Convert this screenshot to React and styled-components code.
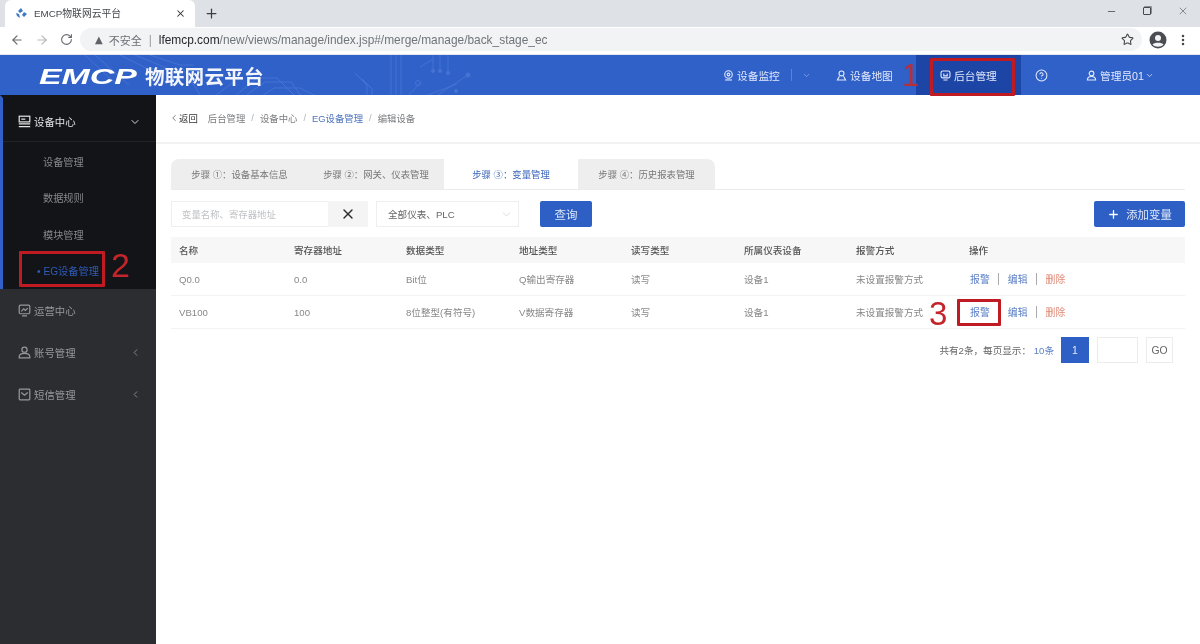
import React from 'react';
import styled, { createGlobalStyle } from 'styled-components';
import { ArrowLeft, ArrowRight, RotateCw, Star, EllipsisVertical, X, Plus, Minus, ChevronDown, ChevronLeft, CircleHelp } from 'lucide-react';

const Global = createGlobalStyle`
  html, body { margin: 0; padding: 0; height: 100%; background: #fff; }
  #root { height: 644px; }
  * { box-sizing: border-box; }
  body { font-family: "Liberation Sans", "Noto Sans CJK SC", sans-serif; overflow: hidden; }
`;
const Page = styled.div`width:1200px;height:644px;display:flex;flex-direction:column;position:relative;overflow:hidden;filter:blur(.3px);`;

/* browser chrome */
const TabStrip = styled.div`height:27px;background:#dee1e6;display:flex;align-items:flex-end;padding-left:5px;`;
const BrowserTab = styled.div`width:190px;height:27px;background:#fff;border-radius:6px 6px 0 0;display:flex;align-items:center;padding:0 9px 1px 10px;font-size:9.8px;color:#45484d;gap:6px;`;
const TabTitle = styled.span`flex:1;`;
const NewTab = styled.div`width:32px;height:27px;display:flex;align-items:center;justify-content:center;color:#3c4043;`;
const WinControls = styled.div`margin-left:auto;height:27px;display:flex;align-items:center;gap:26px;padding:0 11px 5px 0;color:#5a5d62;`;
const Restore = styled.span`width:8px;height:8px;border:1.4px solid #45484d;border-radius:1px;display:block;box-shadow:1px -1px 0 #8a8d92;`;
const UrlBar = styled.div`height:28px;background:#fff;display:flex;align-items:center;padding:0 10px 2px 10px;border-bottom:1px solid #e3e6ea;color:#666a70;`;
const NavIcons = styled.div`display:flex;gap:11px;align-items:center;width:70px;`;
const Omnibox = styled.div`flex:1;height:23px;background:#f1f3f4;border-radius:12px;display:flex;align-items:center;padding:0 8px 0 15px;font-size:11.9px;color:#70757a;gap:6px;`;
const Warn = styled.span`font-size:10px;color:#5f6368;font-family:"DejaVu Sans",sans-serif;`;
const Insecure = styled.span`font-size:11px;color:#6b6f74;`;
const Host = styled.b`font-weight:400;color:#24272b;`;
const UrlSep = styled.span`color:#9a9da1;margin:0 1px;`;
const OmniStar = styled.span`margin-left:auto;display:flex;color:#45484d;`;
const Avatar = styled.svg`width:18px;height:18px;margin:0 9px 0 7px;`;

/* app header */
const Header = styled.header`height:40px;background:#2f61c9;display:flex;align-items:center;position:relative;color:#fff;overflow:hidden;`;
const Circuit = styled.svg`position:absolute;left:0;top:0;width:600px;height:41px;`;
const LogoMark = styled.span`display:block;width:106px;margin:3px 0 0 39px;font:italic 700 22px/1 "Liberation Sans",sans-serif;transform:scaleX(1.54);transform-origin:left center;position:relative;`;
const LogoText = styled.span`font-size:19.6px;font-weight:700;letter-spacing:.2px;position:relative;color:#f2f5fb;`;
const Nav = styled.nav`margin-left:auto;display:flex;align-items:center;height:100%;font-size:10.7px;color:#e4eafa;position:relative;`;
const NavItem = styled.div`display:flex;align-items:center;gap:3px;height:100%;width:${p=>p.$w}px;padding-left:${p=>p.$pl||0}px;background:${p=>p.$active?'#1c45a6':'transparent'};`;
const NavDivider = styled.span`width:1px;height:12px;background:#5a82d8;margin:0 7px 0 8px;`;
const IconBox = styled.svg`width:11px;height:11px;fill:none;stroke:currentColor;stroke-width:1.6;flex:none;`;

const Body = styled.div`flex:1;display:flex;min-height:0;`;

/* side menu */
const Side = styled.aside`width:156px;background:#2b2d31;display:flex;flex-direction:column;font-size:10px;color:#a9abaf;`;
const OpenGroup = styled.div`background:#131417;height:194px;border-left:3px solid #2f61c9;border-top:3px solid #131417;`;
const GroupHead = styled.div`height:44px;display:flex;align-items:center;padding:4px 0 0 15px;gap:3px;color:#e2e3e5;border-bottom:1px solid #232428;font-size:10.4px;`;
const Chevron = styled.span`margin-left:auto;margin-right:${p=>p.$mr}px;display:flex;color:${p=>p.$c};`;
const SubList = styled.div`display:flex;flex-direction:column;padding-top:1px;`;
const SubItem = styled.div`height:36.5px;display:flex;align-items:center;padding-left:${p=>p.$active?'34px':'40px'};color:${p=>p.$active?'#2f5cb8':'#85878b'};font-size:10.2px;`;
const SideItem = styled.div`height:42px;display:flex;align-items:center;padding-left:18px;gap:3px;font-size:10.4px;color:#96989c;`;
const SideItems = styled.div``;

/* main */
const Main = styled.main`flex:1;min-width:0;background:#fff;`;
const Crumbs = styled.div`height:49px;border-bottom:2px solid #f3f3f3;display:flex;align-items:center;padding:0 0 2px 13px;font-size:9.4px;color:#7b7d80;`;
const Back = styled.span`display:flex;align-items:center;color:#333;margin-right:10px;`;
const CrumbSep = styled.span`margin:0 6px;color:#b0b2b5;`;
const CrumbLink = styled.span`color:#4d73bd;`;
const Content = styled.div`padding:15px 15px 0 15px;`;
const Tabs = styled.div`display:flex;height:31px;border-bottom:1px solid #ececec;`;
const StepTab = styled.div`width:${p=>p.$w}px;height:30px;display:flex;align-items:center;justify-content:center;font-size:9.4px;color:${p=>p.$active?'#3b66bb':'#777'};background:${p=>p.$active?'#fff':'#eeeeee'};border-radius:${p=>p.$r||'0'};`;
const Filter = styled.div`display:flex;align-items:center;height:26px;margin-top:11px;`;
const SearchInput = styled.div`width:157px;height:100%;border:1px solid #eeeeee;border-right:0;padding-left:10px;display:flex;align-items:center;font-size:9.4px;color:#bfc1c4;`;
const ClearBtn = styled.div`width:40px;height:100%;background:#f4f4f4;display:flex;align-items:center;justify-content:center;color:#2a2a2a;`;
const SelectBox = styled.div`width:143px;height:100%;margin-left:8px;border:1px solid #eeeeee;padding:0 5px 0 11px;display:flex;align-items:center;font-size:9.6px;color:#666;justify-content:space-between;`;
const Btn = styled.div`height:26px;background:#2d5fc4;border-radius:2px;color:#dfe7f8;display:flex;align-items:center;justify-content:center;font-size:${p=>p.$fs||11.5}px;width:${p=>p.$w}px;margin-left:${p=>p.$ml||'0'};gap:6px;`;
const Row = styled.div`display:grid;grid-template-columns:115px 112px 113px 112px 113px 112px 113px 1fr;align-items:center;padding-left:8px;height:${p=>p.$h}px;font-size:9.6px;color:${p=>p.$head?'#555':'#888'};background:${p=>p.$head?'#f7f7f7':'#fff'};border-bottom:${p=>p.$head?'0':'1px solid #f3f3f3'};font-weight:${p=>p.$head?500:400};`;
const TableWrap = styled.div`margin-top:10px;`;
const Actions = styled.div`display:flex;align-items:center;padding-left:1px;font-size:9.9px;`;
const ActionLink = styled.span`color:${p=>p.$danger?'#e08a78':'#5b7fc6'};`;
const ActionSep = styled.span`width:1px;height:12px;background:#a9abae;margin:0 8.500px;`;
const Pager = styled.div`display:flex;align-items:center;justify-content:flex-end;height:26px;margin-top:8px;padding-right:12px;font-size:9.6px;color:#666;`;
const PageCount = styled.span`color:#5b7fc6;`;
const PageBtn = styled.div`width:${p=>p.$w}px;height:26px;margin-left:${p=>p.$ml}px;border:1px solid ${p=>p.$on?'#2d5fc4':'#ececec'};background:${p=>p.$on?'#2d5fc4':'#fff'};color:${p=>p.$on?'#e4ebfa':'#666'};display:flex;align-items:center;justify-content:center;font-size:10.4px;`;

/* red annotations, lying over the page */
const Mark = styled.div`position:absolute;left:${p=>p.$x}px;top:${p=>p.$y}px;width:${p=>p.$w}px;height:${p=>p.$h}px;border:3px solid #c01a22;border-radius:1px;`;
const MarkNum = styled.div`position:absolute;left:${p=>p.$x}px;top:${p=>p.$y}px;color:${p=>p.$c||'#c4252b'};font:400 ${p=>p.$s}px/1 "Liberation Sans",sans-serif;`;

const NavGlyph = ({ kind }) => (
  <IconBox viewBox="0 0 16 16">
    {kind === 'cam' && <><circle cx="8" cy="6.500" r="5.500"/><circle cx="8" cy="6.500" r="2"/><path d="M3 14.500h10"/></>}
    {kind === 'map' && <><circle cx="8" cy="5" r="3.600"/><path d="M5 9l-3 5.500h12L11 9"/></>}
    {kind === 'screen' && <><rect x="1.500" y="1.500" width="13" height="10" rx="2.500"/><path d="M5 14.500h6M5.500 5v3.500h5V5"/></>}
    {kind === 'user' && <><circle cx="8" cy="5" r="3.400"/><path d="M2 14.500c0-3.500 2.500-5 6-5s6 1.500 6 5z"/></>}
  </IconBox>
);
const SideGlyph = ({ kind }) => (
  <svg width="13" height="13" viewBox="0 0 16 16" fill="none" stroke="currentColor" strokeWidth="1.5" style={{flex:'none'}}>
    {kind === 'server' && <><rect x="1.500" y="1.500" width="13" height="7"/><path d="M4 5h5M1 11h14M1 14.300h14"/></>}
    {kind === 'chart' && <><rect x="1.500" y="1.500" width="13" height="10.500" rx="1.500"/><path d="M4 9l3-3 2 2 3-3M5 14.500h6"/></>}
    {kind === 'user' && <><circle cx="8" cy="4.500" r="3.200"/><path d="M1.500 14.500v-1.500c0-2.500 3-4 6.500-4s6.500 1.500 6.500 4v1.500z"/></>}
    {kind === 'mail' && <><rect x="1.500" y="1.500" width="13" height="13" rx="1"/><path d="M4 5.500l4 3.500 4-3.500"/></>}
  </svg>
);

const columns = ['名称','寄存器地址','数据类型','地址类型','读写类型','所属仪表设备','报警方式','操作'];
const rows = [
  ['Q0.0','0.0','Bit位','Q输出寄存器','读写','设备1','未设置报警方式'],
  ['VB100','100','8位整型(有符号)','V数据寄存器','读写','设备1','未设置报警方式'],
];
const steps = [
  ['步骤 ①:设备基本信息',137,'8px 0 0 0'],
  ['步骤 ②:网关、仪表管理',136],
  ['步骤 ③:变量管理',134,'8px 8px 0 0',true],
  ['步骤 ④:历史报表管理',137,'0 8px 0 0'],
].map(([t,...rest]) => [t.replace(':', '\uFF1A'), ...rest]);

export default function App() {
  return (
    <Page>
      <Global />
      <TabStrip>
        <BrowserTab>
          <svg width="13" height="12" viewBox="0 0 13 12"><path d="M6 1l2 3-3 2-2-2zM9 5l3 2-3 3-2-2zM1 6l3 1 1 4-3-2z" fill="#3f78c4"/></svg>
          <TabTitle>EMCP物联网云平台</TabTitle>
          <X size={11} color="#333" strokeWidth={2.2}/>
        </BrowserTab>
        <NewTab><Plus size={15} strokeWidth={2}/></NewTab>
        <WinControls>
          <Minus size={11}/>
          <Restore/>
          <X size={12} strokeWidth={1.3}/>
        </WinControls>
      </TabStrip>
      <UrlBar>
        <NavIcons>
          <ArrowLeft size={14}/>
          <ArrowRight size={14} color="#b5b8bc"/>
          <RotateCw size={13}/>
        </NavIcons>
        <Omnibox>
          <Warn>▲</Warn>
          <Insecure>不安全</Insecure>
          <UrlSep>|</UrlSep>
          <span><Host>lfemcp.com</Host>/new/views/manage/index.jsp#/merge/manage/back_stage_ec</span>
          <OmniStar><Star size={13}/></OmniStar>
        </Omnibox>
        <Avatar viewBox="0 0 18 18">
          <circle cx="9" cy="9" r="8.500" fill="#4a4d52"/>
          <circle cx="9" cy="7" r="3" fill="#f1f3f4"/>
          <path d="M3.500 13.500c1.500-2.500 9.500-2.500 11 0-2.500 3-8.500 3-11 0z" fill="#f1f3f4"/>
        </Avatar>
        <EllipsisVertical size={14} color="#45484d" strokeWidth={2.4}/>
      </UrlBar>
      <Header>
        <Circuit viewBox="0 0 600 41" fill="none" stroke="#4672d2" strokeWidth="1">
          <path d="M85 0l30 28M95 0l34 30M120 0l28 14h18M135 0l34 14h14l18 27M150 0l30 10h14M215 41l20-15M235 41l22-18h20l18 18M245 41l20-14h26l10 14M262 41l12-8h26l16 8"/>
          <path d="M391 0v41M396 0v41M401 0v41M362 24l10 10v7M355 18l12 12v11"/>
          <path d="M420 12l13-8M433 0v15M440 0v17M448 0v17M420 28l-12 13M468 20l-32 21M425 41l32-12"/>
          <g fill="#4672d2" stroke="none"><circle cx="433" cy="16" r="2"/><circle cx="440" cy="16" r="2"/><circle cx="448" cy="18" r="2"/><circle cx="468" cy="20" r="2.500"/><circle cx="456" cy="36" r="2"/></g>
          <circle cx="418" cy="28" r="2.500"/>
        </Circuit>
        <LogoMark>EMCP</LogoMark>
        <LogoText>物联网云平台</LogoText>
        <Nav>
          <NavItem $w={96} $pl={3}>
            <NavGlyph kind="cam"/>设备监控<NavDivider/><ChevronDown size={9} color="#8fabe6"/>
          </NavItem>
          <NavItem $w={100} $pl={20}><NavGlyph kind="map"/>设备地图</NavItem>
          <NavItem $w={105} $pl={24} $active><NavGlyph kind="screen"/>后台管理</NavItem>
          <NavItem $w={44} $pl={14}><CircleHelp size={13} strokeWidth={1.9}/></NavItem>
          <NavItem $w={135} $pl={21}><NavGlyph kind="user"/>管理员01<ChevronDown size={9} style={{marginLeft:-2}}/></NavItem>
        </Nav>
      </Header>
      <Body>
        <Side>
          <OpenGroup>
            <GroupHead>
              <SideGlyph kind="server"/>设备中心
              <Chevron $mr={15} $c="#d7d8da"><ChevronDown size={12} strokeWidth={2}/></Chevron>
            </GroupHead>
            <SubList>
              <SubItem>设备管理</SubItem>
              <SubItem>数据规则</SubItem>
              <SubItem>模块管理</SubItem>
              <SubItem $active>• EG设备管理</SubItem>
            </SubList>
          </OpenGroup>
          <SideItems>
            <SideItem><SideGlyph kind="chart"/>运营中心</SideItem>
            <SideItem><SideGlyph kind="user"/>账号管理<Chevron $mr={15} $c="#8a8c90"><ChevronLeft size={11}/></Chevron></SideItem>
            <SideItem><SideGlyph kind="mail"/>短信管理<Chevron $mr={15} $c="#8a8c90"><ChevronLeft size={11}/></Chevron></SideItem>
          </SideItems>
        </Side>
        <Main>
          <Crumbs>
            <Back><ChevronLeft size={10} strokeWidth={1.5}/>返回</Back>
            后台管理<CrumbSep>/</CrumbSep>设备中心<CrumbSep>/</CrumbSep><CrumbLink>EG设备管理</CrumbLink><CrumbSep>/</CrumbSep>编辑设备
          </Crumbs>
          <Content>
            <Tabs>
              {steps.map(([label,w,r,active]) => <StepTab key={label} $w={w} $r={r} $active={active}>{label}</StepTab>)}
            </Tabs>
            <Filter>
              <SearchInput>变量名称、寄存器地址</SearchInput>
              <ClearBtn><X size={16} strokeWidth={2}/></ClearBtn>
              <SelectBox>全部仪表、PLC<ChevronDown size={13} color="#c8cacc" strokeWidth={1.2}/></SelectBox>
              <Btn $w={52} $ml="21px">查询</Btn>
              <Btn $w={91} $ml="auto" $fs={11.4}><Plus size={13} strokeWidth={2.4} color="#fff"/>添加变量</Btn>
            </Filter>
            <TableWrap>
              <Row $head $h={26}>{columns.map(c => <span key={c}>{c}</span>)}</Row>
              {rows.map(r => (
                <Row $h={33} key={r[0]}>
                  {r.map((c,i) => <span key={i}>{c}</span>)}
                  <Actions>
                    <ActionLink>报警</ActionLink><ActionSep/><ActionLink>编辑</ActionLink><ActionSep/><ActionLink $danger>删除</ActionLink>
                  </Actions>
                </Row>
              ))}
            </TableWrap>
            <Pager>
              {'共有2条\uFF0C每页显示\uFF1A'}&nbsp;<PageCount>10条</PageCount>
              <PageBtn $w={28} $ml={7} $on>1</PageBtn>
              <PageBtn $w={41} $ml={8}/>
              <PageBtn $w={27} $ml={8}>GO</PageBtn>
            </Pager>
          </Content>
        </Main>
      </Body>
      <Mark $x={930} $y={58} $w={85} $h={38}/>
      <MarkNum $x={902} $y={60} $s={31} $c="#b5303a">1</MarkNum>
      <Mark $x={19} $y={251} $w={86} $h={36}/>
      <MarkNum $x={111} $y={248} $s={34}>2</MarkNum>
      <Mark $x={957} $y={299} $w={44} $h={27}/>
      <MarkNum $x={929} $y={297} $s={33}>3</MarkNum>
    </Page>
  );
}
